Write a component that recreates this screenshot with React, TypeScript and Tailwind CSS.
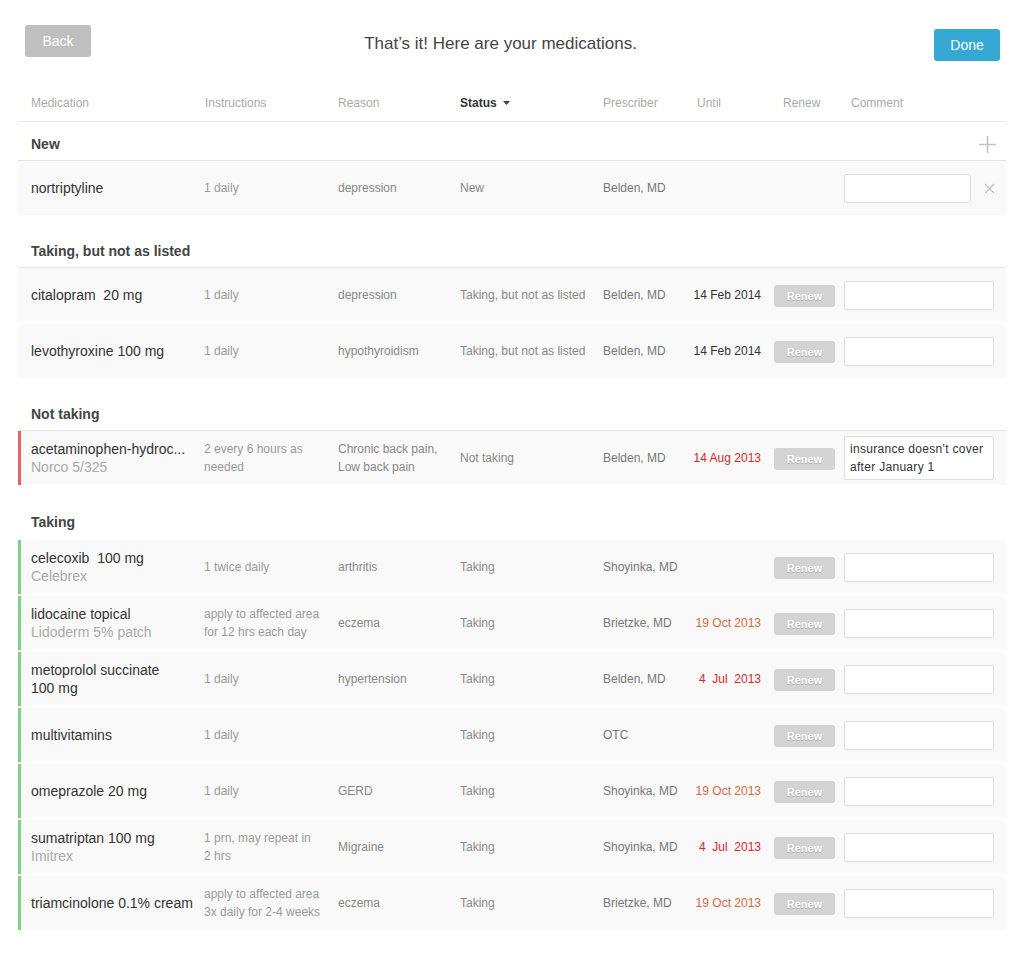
import React from "react";

type Med = {
  name: string;
  brand?: string;
  instructions: string;
  reason: string;
  status: string;
  prescriber: string;
  until?: string;
  untilTone?: "dark" | "red" | "orange";
  renew?: boolean;
  comment?: string;
  removable?: boolean;
};

type Section = {
  title: string;
  accent?: "red" | "green";
  border?: boolean;
  addable?: boolean;
  meds: Med[];
};

const sections: Section[] = [
  {
    title: "New",
    border: true,
    addable: true,
    meds: [
      {
        name: "nortriptyline",
        instructions: "1 daily",
        reason: "depression",
        status: "New",
        prescriber: "Belden, MD",
        removable: true,
      },
    ],
  },
  {
    title: "Taking, but not as listed",
    border: true,
    meds: [
      {
        name: "citalopram\u00a0 20 mg",
        instructions: "1 daily",
        reason: "depression",
        status: "Taking, but not as listed",
        prescriber: "Belden, MD",
        until: "14 Feb 2014",
        untilTone: "dark",
        renew: true,
      },
      {
        name: "levothyroxine 100 mg",
        instructions: "1 daily",
        reason: "hypothyroidism",
        status: "Taking, but not as listed",
        prescriber: "Belden, MD",
        until: "14 Feb 2014",
        untilTone: "dark",
        renew: true,
      },
    ],
  },
  {
    title: "Not taking",
    accent: "red",
    border: true,
    meds: [
      {
        name: "acetaminophen-hydroc...",
        brand: "Norco 5/325",
        instructions: "2 every 6 hours as needed",
        reason: "Chronic back pain, Low back pain",
        status: "Not taking",
        prescriber: "Belden, MD",
        until: "14 Aug 2013",
        untilTone: "red",
        renew: true,
        comment: "insurance doesn't cover after January 1",
      },
    ],
  },
  {
    title: "Taking",
    accent: "green",
    meds: [
      {
        name: "celecoxib\u00a0 100 mg",
        brand: "Celebrex",
        instructions: "1 twice daily",
        reason: "arthritis",
        status: "Taking",
        prescriber: "Shoyinka, MD",
        renew: true,
      },
      {
        name: "lidocaine topical",
        brand: "Lidoderm 5% patch",
        instructions: "apply to affected area for 12 hrs each day",
        reason: "eczema",
        status: "Taking",
        prescriber: "Brietzke, MD",
        until: "19 Oct 2013",
        untilTone: "orange",
        renew: true,
      },
      {
        name: "metoprolol succinate 100\u00a0mg",
        instructions: "1 daily",
        reason: "hypertension",
        status: "Taking",
        prescriber: "Belden, MD",
        until: "4\u00a0 Jul\u00a0 2013",
        untilTone: "red",
        renew: true,
      },
      {
        name: "multivitamins",
        instructions: "1 daily",
        reason: "",
        status: "Taking",
        prescriber: "OTC",
        renew: true,
      },
      {
        name: "omeprazole 20 mg",
        instructions: "1 daily",
        reason: "GERD",
        status: "Taking",
        prescriber: "Shoyinka, MD",
        until: "19 Oct 2013",
        untilTone: "orange",
        renew: true,
      },
      {
        name: "sumatriptan 100 mg",
        brand: "Imitrex",
        instructions: "1 prn, may repeat in 2\u00a0hrs",
        reason: "Migraine",
        status: "Taking",
        prescriber: "Shoyinka, MD",
        until: "4\u00a0 Jul\u00a0 2013",
        untilTone: "red",
        renew: true,
      },
      {
        name: "triamcinolone 0.1% cream",
        instructions: "apply to affected area 3x daily for 2-4 weeks",
        reason: "eczema",
        status: "Taking",
        prescriber: "Brietzke, MD",
        until: "19 Oct 2013",
        untilTone: "orange",
        renew: true,
      },
    ],
  },
];

const cols = "grid grid-cols-[186px_134px_122px_143px_94px_68px_78px_1fr]";

function MedRow({ med, accent }: { med: Med; accent?: Section["accent"] }) {
  const untilColor =
    med.untilTone === "red"
      ? "text-[#d3262d]"
      : med.untilTone === "orange"
        ? "text-[#cf6a3f]"
        : "text-[#333]";

  return (
    <div
      className={`${cols} h-[54px] items-center bg-[#f9f9f9] ${
        accent === "red"
          ? "shadow-[inset_3px_0_0_#e0666b]"
          : accent === "green"
            ? "shadow-[inset_3px_0_0_#7fd18b]"
            : ""
      }`}
    >
      <div className="pl-[13px] pr-2 text-[14px] leading-[18px] text-[#333]">
        <div>{med.name}</div>
        {med.brand && <div className="text-[#aaa]">{med.brand}</div>}
      </div>
      <div className="max-w-[119px] text-[12px] leading-[18px] text-[#999]">{med.instructions}</div>
      <div className="pr-3 text-[12px] leading-[18px] text-[#888]">{med.reason}</div>
      <div className="text-[12px] text-[#888]">{med.status}</div>
      <div className="text-[12px] text-[#777]">{med.prescriber}</div>
      <div className={`flex justify-end whitespace-nowrap pr-1 text-[12px] ${untilColor}`}>
        {med.until}
      </div>
      <div className="pl-[9px]">
        {med.renew && (
          <button
            type="button"
            className="h-[22px] w-[61px] rounded-[3px] bg-[#d4d4d4] text-[11px] font-bold text-white [text-shadow:0_1px_1px_rgba(0,0,0,0.2)]"
          >
            Renew
          </button>
        )}
      </div>
      <div className="flex items-center pl-px">
        {med.comment ? (
          <div className="w-[150px] rounded-[2px] border border-[#ddd] bg-white px-[5px] py-[3px] text-[12px] leading-[18px] tracking-[0.3px] text-[#333]">
            {med.comment}
          </div>
        ) : (
          <div
            className={`h-[29px] rounded-[2px] border border-[#ddd] bg-white ${
              med.removable ? "w-[127px]" : "w-[150px]"
            }`}
          />
        )}
        {med.removable && (
          <svg className="ml-[13px] h-[11px] w-[11px]" viewBox="0 0 11 11">
            <path d="M1 1L10 10M10 1L1 10" stroke="#c4c4c4" strokeWidth="1.4" />
          </svg>
        )}
      </div>
    </div>
  );
}

export default function App() {
  return (
    <div className="min-h-[956px] bg-white font-['Helvetica_Neue','Liberation_Sans',Arial,sans-serif]">
      <div className="flex items-start justify-between px-[24px] pt-[25px]">
        <button
          type="button"
          className="ml-px h-[32px] w-[66px] rounded-[3px] bg-[#bfbfbf] text-[14px] text-white"
        >
          Back
        </button>
        <h1 className="mt-[7px] pr-[24px] text-[17px] leading-[24px] font-normal text-[#444]">
          That’s it! Here are your medications.
        </h1>
        <button
          type="button"
          className="mt-1 h-[32px] w-[66px] rounded-[3px] bg-[#35a8d4] text-[14px] text-white"
        >
          Done
        </button>
      </div>

      <div className="mx-[18px] mt-[24px]">
        <div className={`${cols} h-[37px] items-center border-b border-[#e5e5e5] text-[12px] text-[#aaa]`}>
          <div className="pl-[13px]">Medication</div>
          <div className="pl-px">Instructions</div>
          <div>Reason</div>
          <div className="flex items-center gap-[6px] font-bold text-[#333]">
            Status
            <svg className="h-[4px] w-[7px]" viewBox="0 0 7 4">
              <path d="M0 0H7L3.5 4Z" fill="#444" />
            </svg>
          </div>
          <div>Prescriber</div>
          <div>Until</div>
          <div className="pl-[18px]">Renew</div>
          <div className="pl-[8px]">Comment</div>
        </div>

        {sections.map((section, i) => (
          <div key={section.title}>
            <div
              className={`flex items-center justify-between pb-[6px] pl-[13px] ${
                i === 0 ? "pt-[12px]" : section.border ? "pt-[26px]" : "pt-[27px]"
              } ${section.border ? "border-b border-[#e5e5e5]" : ""}`}
            >
              <span className="text-[14px] leading-[20px] font-bold text-[#444]">{section.title}</span>
              {section.addable && (
                <svg className="mr-[10px] h-[17px] w-[17px]" viewBox="0 0 17 17">
                  <path d="M8.5 0V17M0 8.5H17" stroke="#c4c4c4" strokeWidth="1.6" />
                </svg>
              )}
            </div>
            <div className={`flex flex-col gap-[2px] ${section.border ? "" : "pt-[2px]"}`}>
              {section.meds.map((med) => (
                <MedRow key={med.name} med={med} accent={section.accent} />
              ))}
            </div>
          </div>
        ))}
      </div>
    </div>
  );
}
